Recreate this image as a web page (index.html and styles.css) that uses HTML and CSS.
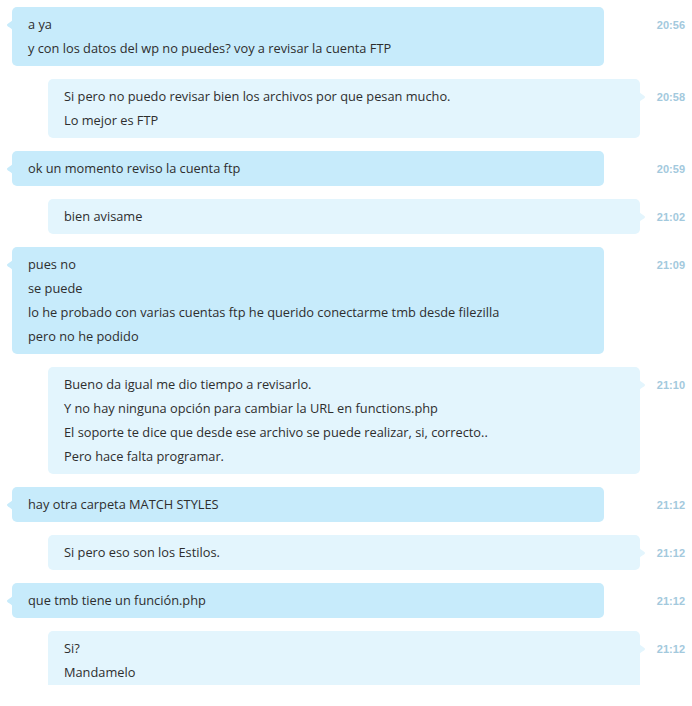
FILE: index.html
```html
<!DOCTYPE html>
<html>
<head>
<meta charset="utf-8">
<link rel="stylesheet" href="styles.css">
</head>
<body>
<div class="chat">
  <div class="row in">
    <div class="bubble"><svg class="tail" width="6" height="14" viewBox="0 0 6 14"><path d="M6 0 C6 4 0 5 0 7 C0 9 6 10 6 14 Z"/></svg>
      <div class="line">a ya</div>
      <div class="line">y con los datos del wp no puedes? voy a revisar la cuenta FTP</div>
    </div>
    <div class="time">20:56</div>
  </div>
  <div class="row out">
    <div class="bubble"><svg class="tail" width="6" height="14" viewBox="0 0 6 14"><path d="M0 0 C0 4 6 5 6 7 C6 9 0 10 0 14 Z"/></svg>
      <div class="line">Si pero no puedo revisar bien los archivos por que pesan mucho.</div>
      <div class="line">Lo mejor es FTP</div>
    </div>
    <div class="time">20:58</div>
  </div>
  <div class="row in">
    <div class="bubble"><svg class="tail" width="6" height="14" viewBox="0 0 6 14"><path d="M6 0 C6 4 0 5 0 7 C0 9 6 10 6 14 Z"/></svg>
      <div class="line">ok un momento reviso la cuenta ftp</div>
    </div>
    <div class="time">20:59</div>
  </div>
  <div class="row out">
    <div class="bubble"><svg class="tail" width="6" height="14" viewBox="0 0 6 14"><path d="M0 0 C0 4 6 5 6 7 C6 9 0 10 0 14 Z"/></svg>
      <div class="line">bien avisame</div>
    </div>
    <div class="time">21:02</div>
  </div>
  <div class="row in">
    <div class="bubble"><svg class="tail" width="6" height="14" viewBox="0 0 6 14"><path d="M6 0 C6 4 0 5 0 7 C0 9 6 10 6 14 Z"/></svg>
      <div class="line">pues no</div>
      <div class="line">se puede</div>
      <div class="line">lo he probado con varias cuentas ftp he querido conectarme tmb desde filezilla</div>
      <div class="line">pero no he podido</div>
    </div>
    <div class="time">21:09</div>
  </div>
  <div class="row out">
    <div class="bubble"><svg class="tail" width="6" height="14" viewBox="0 0 6 14"><path d="M0 0 C0 4 6 5 6 7 C6 9 0 10 0 14 Z"/></svg>
      <div class="line">Bueno da igual me dio tiempo a revisarlo.</div>
      <div class="line">Y no hay ninguna opción para cambiar la URL en functions.php</div>
      <div class="line">El soporte te dice que desde ese archivo se puede realizar, si, correcto..</div>
      <div class="line">Pero hace falta programar.</div>
    </div>
    <div class="time">21:10</div>
  </div>
  <div class="row in">
    <div class="bubble"><svg class="tail" width="6" height="14" viewBox="0 0 6 14"><path d="M6 0 C6 4 0 5 0 7 C0 9 6 10 6 14 Z"/></svg>
      <div class="line">hay otra carpeta MATCH STYLES</div>
    </div>
    <div class="time">21:12</div>
  </div>
  <div class="row out">
    <div class="bubble"><svg class="tail" width="6" height="14" viewBox="0 0 6 14"><path d="M0 0 C0 4 6 5 6 7 C6 9 0 10 0 14 Z"/></svg>
      <div class="line">Si pero eso son los Estilos.</div>
    </div>
    <div class="time">21:12</div>
  </div>
  <div class="row in">
    <div class="bubble"><svg class="tail" width="6" height="14" viewBox="0 0 6 14"><path d="M6 0 C6 4 0 5 0 7 C0 9 6 10 6 14 Z"/></svg>
      <div class="line">que tmb tiene un función.php</div>
    </div>
    <div class="time">21:12</div>
  </div>
  <div class="row out">
    <div class="bubble"><svg class="tail" width="6" height="14" viewBox="0 0 6 14"><path d="M0 0 C0 4 6 5 6 7 C6 9 0 10 0 14 Z"/></svg>
      <div class="line">Si?</div>
      <div class="line">Mandamelo</div>
    </div>
    <div class="time">21:12</div>
  </div>
</div>
</body>
</html>
```
FILE: styles.css
```css
html, body {
  margin: 0;
  padding: 0;
  background: #ffffff;
}
.chat {
  height: 685px;
  overflow: hidden;
  padding-top: 7px;
  box-sizing: border-box;
  display: flex;
  flex-direction: column;
  gap: 13px;
  font-family: "Open Sans", "Noto Sans", sans-serif;
  font-size: 12.8px;
  color: #2e2e2e;
}
.row {
  display: flex;
  align-items: flex-start;
  flex-shrink: 0;
}
.row.in { padding-left: 12px; }
.row.out { padding-left: 48px; }
.bubble {
  position: relative;
  width: 592px;
  box-sizing: border-box;
  padding: 5px 16px 6px 16px;
  border-radius: 5px;
  line-height: 24px;
}
.row.in .bubble { background: #c7ebfb; }
.row.out .bubble { background: #e3f5fd; }
.tail {
  position: absolute;
  top: 11px;
}
.row.in .tail { left: -5px; fill: #c7ebfb; }
.row.out .tail { right: -5px; fill: #e3f5fd; }
.line { white-space: nowrap; }
.time {
  margin-left: auto;
  padding-right: 7px;
  padding-top: 6px;
  line-height: 24px;
  font-family: "Liberation Sans", Arial, sans-serif;
  font-weight: bold;
  font-size: 11px;
  color: #a3c9dd;
}
```
